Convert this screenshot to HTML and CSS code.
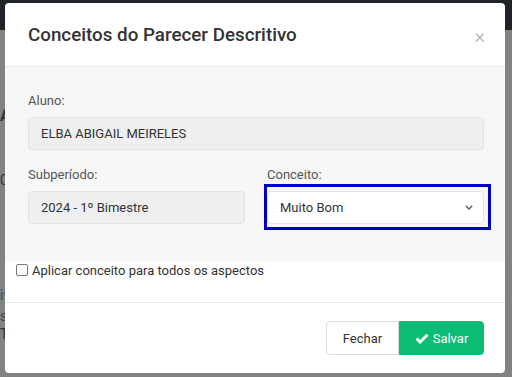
FILE: index.html
```html
<!DOCTYPE html>
<html lang="pt-BR">
<head>
  <meta charset="UTF-8" />
  <meta name="viewport" content="width=device-width, initial-scale=1.0" />
  <title>Conceitos do Parecer Descritivo</title>
  <link rel="stylesheet" href="styles.css">
</head>
<body>
  <div class="page">
    <div class="navbar"></div>
    <div class="page-content">
      <div class="ghost g1">A</div>
      <div class="ghost g2">0</div>
      <div class="ghost g3">iv</div>
      <div class="ghost g4">st</div>
      <div class="ghost g5">T</div>
    </div>
  </div>

  <div class="modal">
    <div class="modal-header">
      <h4>Conceitos do Parecer Descritivo</h4>
      <span class="close">&times;</span>
    </div>

    <div class="modal-body">
      <div class="field">
        <label>Aluno:</label>
        <div class="input readonly">ELBA ABIGAIL MEIRELES</div>
      </div>
      <div class="row">
        <div class="field">
          <label>Subperíodo:</label>
          <div class="input readonly">2024 - 1º Bimestre</div>
        </div>
        <div class="field">
          <label>Conceito:</label>
          <div class="select-wrap">
            <div class="input select">
              <span>Muito Bom</span>
              <svg width="8" height="5" viewBox="0 0 8 5"><path d="M0.8 0.8l3.2 3.2 3.2-3.2" fill="none" stroke="#555" stroke-width="1.3"/></svg>
            </div>
          </div>
        </div>
      </div>
    </div>

    <div class="check-row">
      <span class="checkbox"></span>
      <span>Aplicar conceito para todos os aspectos</span>
    </div>

    <div class="modal-footer">
      <button class="btn btn-default">Fechar</button>
      <button class="btn btn-success">
        <svg width="14" height="11" viewBox="0 0 14 11"><path d="M1.5 5.5l3.6 3.6L12.5 1.7" fill="none" stroke="#fff" stroke-width="2.8"/></svg>
        Salvar
      </button>
    </div>
  </div>
</body>
</html>
```

FILE: styles.css
```css
body {
  margin: 0;
  font-family: Roboto, "Liberation Sans", sans-serif;
  color: #333;
  background: #808080;
}
.page {
  height: 377px;
  display: flex;
  flex-direction: column;
}
.navbar {
  height: 30px;
  background: #202328;
}
.page-content {
  flex: 1;
  position: relative;
  background: #818283;
}
.ghost {
  position: absolute;
  left: 0;
  font-size: 14px;
  color: #2e3238;
}
.g1 { top: 76px; font-weight: bold; font-size: 16px; }
.g2 { top: 142px; }
.g3 { top: 257px; color: #3c4d66; }
.g4 { top: 278px; color: #3c4550; }
.g5 { top: 296px; }

.modal {
  position: absolute;
  left: 5px;
  top: 3px;
  width: 500px;
  height: 370px;
  background: #fff;
  border-radius: 4px;
  overflow: hidden;
  display: flex;
  flex-direction: column;
}
.modal-header {
  height: 63px;
  border-bottom: 1px solid #eaeaea;
  display: flex;
  align-items: center;
  justify-content: space-between;
  padding: 0 20px 0 23px;
}
.modal-header h4 {
  margin: 0;
  font-size: 18.8px;
  font-weight: 500;
  color: #333;
}
.close {
  font-size: 20px;
  color: #aaa;
  font-weight: 300;
  margin-top: 3px;
}
.modal-body {
  background: #f7f7f7;
  padding: 25px 21px 38px 23px;
  display: flex;
  flex-direction: column;
  gap: 16px;
}
.row {
  display: grid;
  grid-template-columns: 1fr 1fr;
  gap: 22px;
}
.field label {
  display: block;
  font-size: 13px;
  color: #555;
  line-height: 18px;
  margin-bottom: 7px;
}
.input {
  height: 31px;
  border: 1px solid #e3e3e3;
  border-radius: 4px;
  padding: 0 12px;
  font-size: 13px;
  display: flex;
  align-items: center;
  color: #333;
}
.readonly {
  background: #efefef;
}
.select-wrap {
  margin: -7px -7px -6px -3px;
  border: 3px solid #0000c4;
  padding: 4px 4px 3px 0;
}
.select {
  background: #fff;
  justify-content: space-between;
  padding-right: 10px;
}
.check-row {
  height: 40px;
  display: flex;
  align-items: flex-start;
  gap: 4px;
  padding: 0 0 0 11px;
  font-size: 13px;
  color: #333;
  line-height: 17px;
  border-bottom: 1px solid #ebebeb;
}
.checkbox {
  width: 10px;
  height: 10px;
  border: 1px solid #767676;
  border-radius: 2px;
  margin-top: 2px;
  background: #fff;
}
.modal-footer {
  flex: 1;
  display: flex;
  justify-content: flex-end;
  align-items: flex-start;
  padding: 18px 21px 0 0;
}
.btn {
  height: 34px;
  font-family: inherit;
  font-size: 13px;
  border-radius: 4px;
  border: 1px solid #ddd;
  cursor: pointer;
  display: flex;
  align-items: center;
  gap: 4px;
}
.btn-default {
  background: #fff;
  color: #333;
  width: 73px;
  justify-content: center;
  border-radius: 4px 0 0 4px;
}
.btn-success {
  background: #0bbd74;
  border-color: #0bbd74;
  color: #fff;
  width: 85px;
  justify-content: center;
  border-radius: 0 4px 4px 0;
}
```
